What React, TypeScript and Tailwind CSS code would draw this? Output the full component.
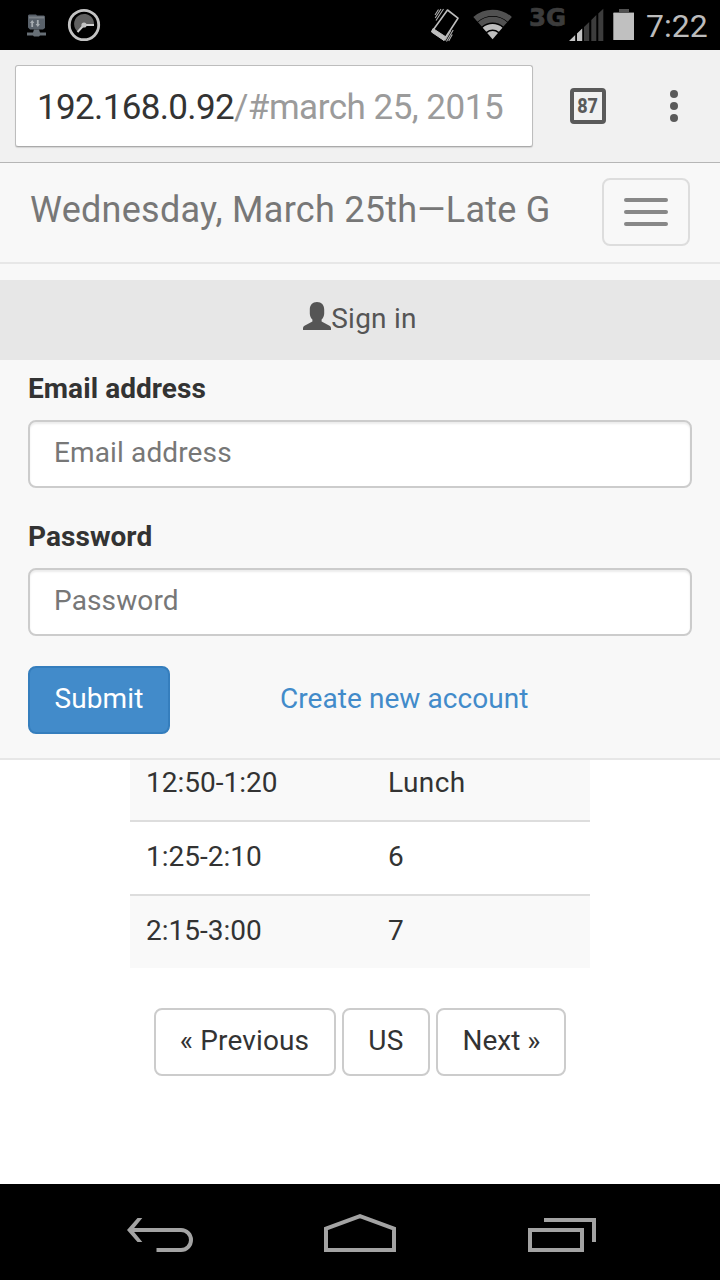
import React from "react";

function StatusBar() {
  return (
    <div className="flex h-[50px] w-full shrink-0 items-center bg-black">
      <svg width="640" height="50" viewBox="0 0 640 50" className="shrink-0">
        <path d="M28 15.500l1-1h7l1 1h7l1 1v11.500l-2 1.500H30l-2-2z" fill="#59616a" />
        <path d="M29 16.500h15v2H29z" fill="#7b8187" />
        <path d="M27 32.500h6l1-3h5l1 3h6v3h-6l-1 1h-5l-1-1h-6z" fill="#676f76" />
        <path d="M30 23l2.200-3 2.200 3h-1.300v4h-1.800v-4zM36.900 24v-4h1.800v4H40l-2.200 3-2.200-3z" fill="#a6acb1" />
        <circle cx="84" cy="25" r="14.7" fill="none" stroke="#c3c3c3" strokeWidth="2.8" />
        <path d="M84 25L77 31A10 10 0 1 1 94 25z" fill="#606060" />
        <path d="M94 25H84L77.500 32" fill="none" stroke="#d0d0d0" strokeWidth="2" />
        <circle cx="84" cy="25" r="2.6" fill="#c3c3c3" />
        <path d="M447.500 10L458 18.200L444 39.700L432.200 31.200z" fill="none" stroke="#bebebe" strokeWidth="1.600" strokeLinejoin="round" />
        <path d="M433 28.500L446 37L444 40.500L431.500 32z" fill="#bebebe" stroke="#bebebe" strokeLinejoin="round" />
        <path d="M443.500 9L436 20.500M441 9L435.200 18M438.500 9.500L435 15M453.200 30L446.500 41.500M452.300 34.500L448.700 41M450.500 31L445 40.500" fill="none" stroke="#b0b0b0" strokeWidth="1.100" />
        <g fill="none">
          <path d="M475.400 19.300A26.150 26.150 0 0 1 509.800 19.300" stroke="#515151" strokeWidth="6.300" />
          <path d="M479.900 24.400A19.300 19.300 0 0 1 505.300 24.400" stroke="#515151" strokeWidth="5.800" />
          <path d="M484.500 29.700A12.300 12.300 0 0 1 500.700 29.700" stroke="#bebebe" strokeWidth="5.500" />
        </g>
        <path d="M487.200 33A8 8 0 0 1 498 33L492.600 39.200z" fill="#bebebe" />
        <text x="529" y="26" fill="#3c3c3c" stroke="#3c3c3c" strokeWidth="0.700" fontFamily="DejaVu Sans, sans-serif" fontWeight="700" fontSize="24" textLength="37" lengthAdjust="spacingAndGlyphs">3G</text>
        <path d="M569 41L575.200 35V41zM577 33.500L582.200 28.500V41H577z" fill="#c4c4c4" />
        <path d="M584 27l5.200-5V41H584zM591.300 20l5-5V41h-5zM598.300 13.500l5-4.700V41h-5z" fill="#3c3c3c" />
        <path d="M619 9h10v3h5v3h-20.500v-3h5.500z" fill="#515151" />
        <path d="M613.300 13h20.700v27h-20.700z" fill="#c0c0c0" />
      </svg>
      <span className="ml-[6px] w-[72px] pt-px text-[32px] leading-[48px] whitespace-nowrap text-[#bcbcbc]">7:22</span>
    </div>
  );
}

function Toolbar() {
  return (
    <div className="flex h-[113px] shrink-0 border-b border-[#b6b6b6] bg-[#f1f1f1] pt-[15px] shadow-[0_1px_1px_#dedede]">
      <div className="ml-[15px] flex h-[82px] w-[518px] items-center rounded-[3px] border border-[#bdbdbd] border-b-[#aaa] bg-white pt-[3px] pl-[21px] text-[35px] leading-[40px] whitespace-nowrap shadow-[0_1px_1px_#d4d4d4]">
        <span className="tracking-[-0.65px] text-[#333]">192.168.0.92</span>
        <span className="tracking-[-0.5px] text-[#9b9b9b]">/#march 25, 2015</span>
      </div>
      <div className="mt-[23px] ml-[37px] flex size-[36px] items-center justify-center rounded-[4px] border-4 border-[#5a5a5a]">
        <span className="text-[20px] leading-none font-extrabold text-[#5a5a5a]">
          <span className="inline-block scale-x-[0.9]">87</span>
        </span>
      </div>
      <div className="mt-[25px] ml-[64px] flex flex-col gap-[4px]">
        <span className="size-[8px] rounded-full bg-[#5a5a5a]" />
        <span className="size-[8px] rounded-full bg-[#5a5a5a]" />
        <span className="size-[8px] rounded-full bg-[#5a5a5a]" />
      </div>
    </div>
  );
}

function NavHeader() {
  return (
    <div className="flex h-[101px] shrink-0 items-start justify-between border-b-2 border-[#e7e7e7] pr-[30px] pl-[30px]">
      <span className="mt-[27px] text-[36px] leading-[40px] tracking-[0.27px] whitespace-nowrap text-[#777]">Wednesday, March 25th—Late G</span>
      <button className="mt-[15px] flex h-[68px] w-[88px] flex-col items-center justify-center gap-[8px] rounded-[8px] border-2 border-[#ddd]">
        <span className="h-[4px] w-[44px] rounded-[2px] bg-[#888]" />
        <span className="h-[4px] w-[44px] rounded-[2px] bg-[#888]" />
        <span className="h-[4px] w-[44px] rounded-[2px] bg-[#888]" />
      </button>
    </div>
  );
}

function Field({ label }: { label: string }) {
  return (
    <div className="flex flex-col">
      <label className="mb-[11px] pt-px text-[28px] leading-[40px] font-bold tracking-[0.06px]">{label}</label>
      <input
        placeholder={label}
        className="mb-[28px] h-[68px] w-full rounded-[8px] border-2 border-[#ccc] bg-white px-[24px] pb-[4px] text-[28px] tracking-[0.13px] shadow-[inset_0_2px_2px_rgba(0,0,0,0.075)] placeholder:text-[#777]"
      />
    </div>
  );
}

const rows = [
  ["12:50-1:20", "Lunch"],
  ["1:25-2:10", "6"],
  ["2:15-3:00", "7"],
];

export default function App() {
  return (
    <div className="flex h-[1280px] w-[720px] flex-col overflow-hidden bg-white font-['Roboto',sans-serif] text-[28px] text-[#333]">
      <StatusBar />
      <Toolbar />
      <div className="flex h-[597px] shrink-0 flex-col border-b-2 border-[#e7e7e7] bg-[#f8f8f8]">
        <NavHeader />
        <div className="mt-[16px] flex h-[80px] shrink-0 items-center justify-center bg-[#e7e7e7] text-[#555]">
          <svg width="28" height="28" viewBox="0 0 28 28" className="mb-[8px]">
            <path d="M14 0C18.500 0 21.200 3 21.200 7.500V11.500C21.200 14 20 16.500 18.600 17.500V19.500L26.500 23.700Q28 24.500 28 26V28H0V26Q0 24.500 1.500 23.700L9.400 19.500V17.500C8 16.500 6.800 14 6.800 11.500V7.500C6.800 3 9.500 0 14 0z" fill="#555" />
          </svg>
          <span className="pb-[2px] leading-[40px] tracking-[0.25px]">Sign in</span>
        </div>
        <div className="flex flex-col px-[28px] pt-[8px]">
          <Field label="Email address" />
          <Field label="Password" />
          <div className="mt-[2px] flex">
            <button className="h-[68px] w-[142px] rounded-[8px] border-2 border-[#357ebd] bg-[#428bca] pb-[2px] tracking-[0.1px] text-white">Submit</button>
            <a className="ml-[110px] pt-[13px] leading-[40px] tracking-[0.06px] text-[#428bca]">Create new account</a>
          </div>
        </div>
      </div>
      <div className="mx-auto flex w-[460px] shrink-0 flex-col">
        {rows.map(([time, name], i) => (
          <div
            key={time}
            className={
              i === 0
                ? "flex h-[60px] bg-[#f9f9f9] pt-[3px]"
                : i === 1
                  ? "flex h-[74px] border-t-2 border-[#ddd] pt-[15px]"
                  : "flex h-[74px] border-t-2 border-[#ddd] bg-[#f9f9f9] pt-[15px]"
            }
          >
            <span className="w-[258px] pl-[16px] leading-[40px]">{time}</span>
            <span className="leading-[40px] tracking-[0.45px]">{name}</span>
          </div>
        ))}
      </div>
      <div className="mt-[40px] ml-[154px] flex h-[176px] shrink-0 items-start gap-[6px]">
        <button className="h-[68px] w-[182px] rounded-[8px] border-2 border-[#ccc] pr-px pb-[2px] tracking-[0.15px]">« Previous</button>
        <button className="h-[68px] w-[88px] rounded-[8px] border-2 border-[#ccc] pb-[2px] tracking-[0.3px]">US</button>
        <button className="h-[68px] w-[130px] rounded-[8px] border-2 border-[#ccc] pb-[2px] pl-px">Next »</button>
      </div>
      <div className="flex h-[96px] shrink-0 bg-black">
        <svg width="720" height="96" viewBox="0 1184 720 96" fill="none" stroke="#a3a3a3" strokeWidth="4">
          <path d="M130 1230H181A10 10 0 0 1 181 1250H156.500" />
          <path d="M127 1230L137.500 1218H142.300L132.500 1230L142.300 1242H137.500z" fill="#a3a3a3" stroke="none" />
          <path d="M326 1228.600L360 1216.200L394 1228.600V1250H326z" />
          <path d="M530 1230H582V1250H530zM544 1220H594V1242" />
        </svg>
      </div>
    </div>
  );
}
